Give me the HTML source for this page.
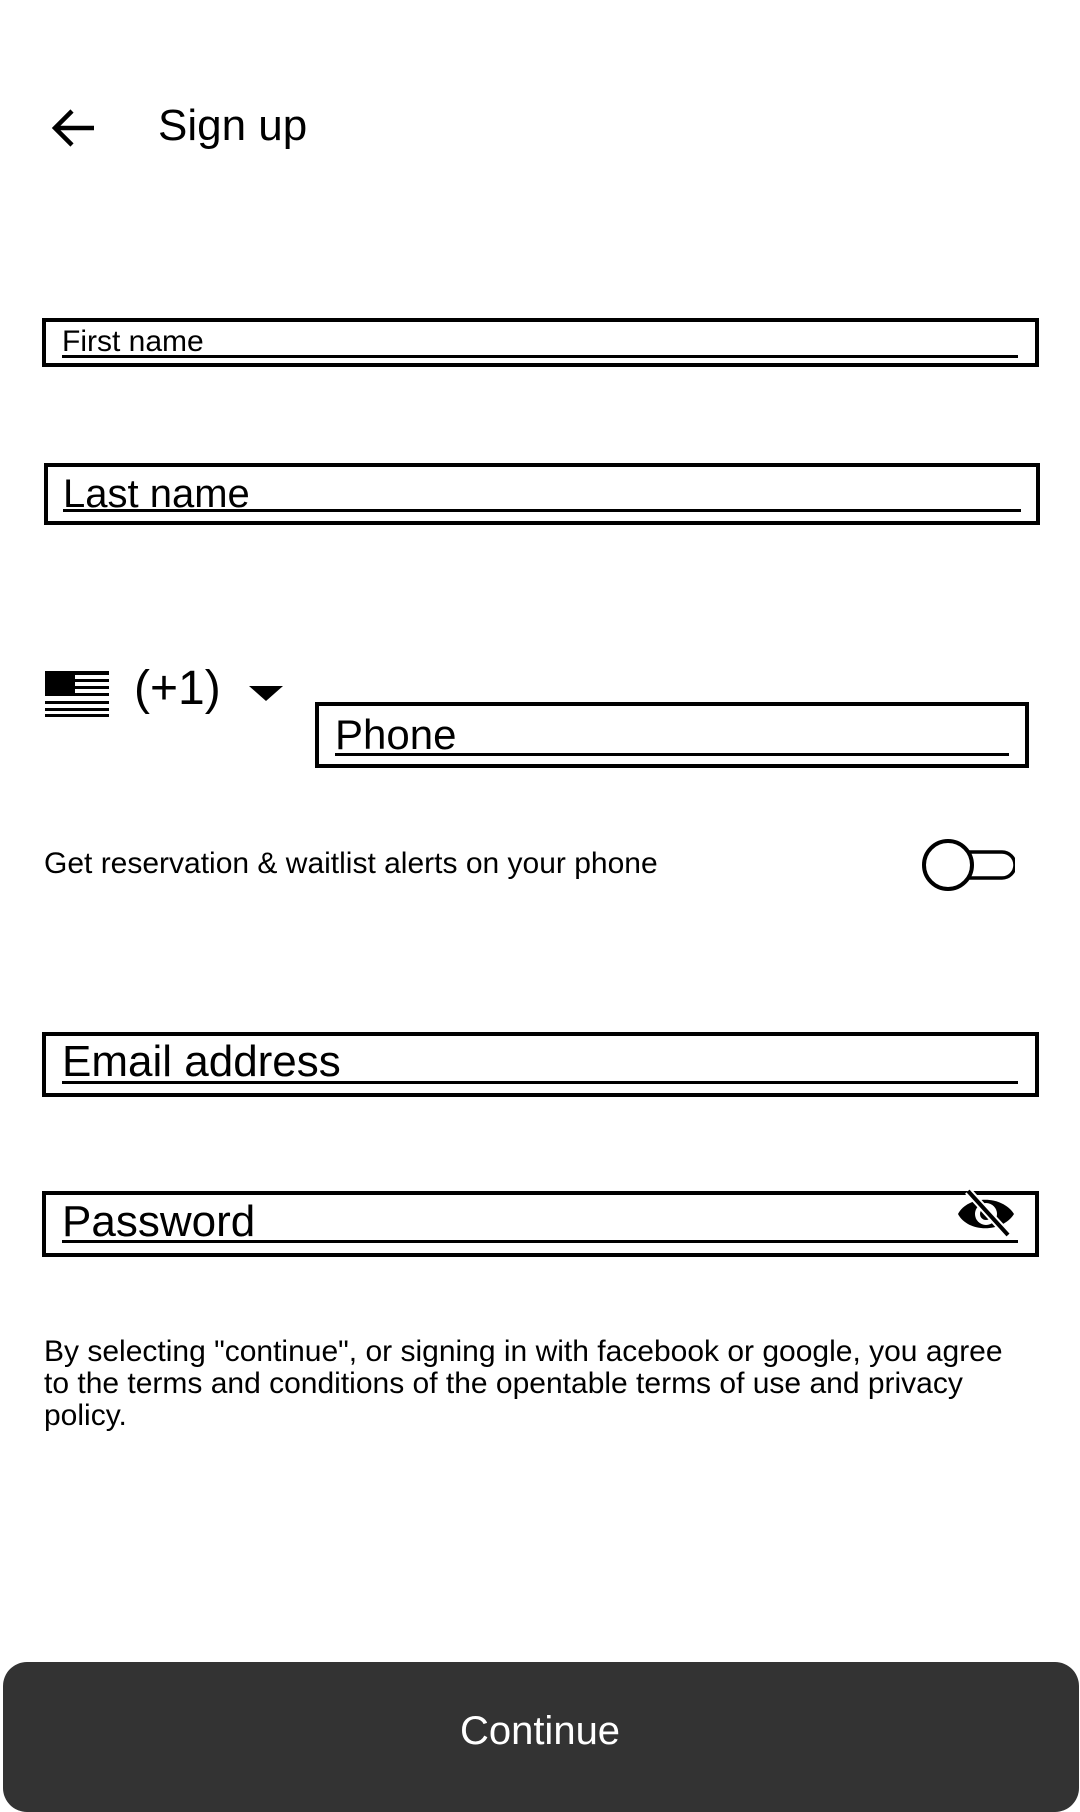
<!DOCTYPE html>
<html><head><meta charset="utf-8"><style>
*{margin:0;padding:0;box-sizing:border-box}
body{width:1080px;height:1800px;background:#fff;position:relative;overflow:hidden;font-family:"Liberation Sans",Arial,sans-serif;color:#000}
.abs{position:absolute}
.box{position:absolute;border:4px solid #000}
.ul{position:absolute;height:3px;background:#000}
.lbl{position:absolute;white-space:nowrap;line-height:1}
</style></head><body>
<svg class="abs" style="left:50px;top:106px" width="46" height="44" viewBox="0 0 46 44"><path d="M44 22H6M22 5L5 22L22 39" fill="none" stroke="#000" stroke-width="4.5"/></svg>
<div class="lbl" style="left:158px;top:104px;font-size:44px">Sign up</div>

<div class="box" style="left:42px;top:318px;width:997px;height:49px"></div>
<div class="lbl" style="left:62px;top:327px;font-size:30px">First name</div>
<div class="ul" style="left:62px;top:355px;width:956px"></div>

<div class="box" style="left:44px;top:463px;width:996px;height:62px"></div>
<div class="lbl" style="left:63px;top:474px;font-size:40px">Last name</div>
<div class="ul" style="left:63px;top:509px;width:958px"></div>

<svg class="abs" style="left:45px;top:671px" width="64" height="46" viewBox="0 0 64 46">
<rect x="0" y="0" width="64" height="4" fill="#000"/><rect x="0" y="8" width="64" height="3" fill="#000"/><rect x="0" y="15" width="64" height="3" fill="#000"/><rect x="0" y="22" width="64" height="3" fill="#000"/><rect x="0" y="30" width="64" height="3" fill="#000"/><rect x="0" y="37" width="64" height="3" fill="#000"/><rect x="0" y="43" width="64" height="3" fill="#000"/><rect x="0" y="0" width="30" height="24" fill="#000"/></svg>
<div class="lbl" style="left:134px;top:665px;font-size:48px">(+1)</div>
<svg class="abs" style="left:249px;top:686px" width="34" height="15"><path d="M0 0H34L17 15Z" fill="#000"/></svg>

<div class="box" style="left:315px;top:702px;width:714px;height:66px"></div>
<div class="lbl" style="left:335px;top:714px;font-size:42px">Phone</div>
<div class="ul" style="left:335px;top:753px;width:674px"></div>

<div class="lbl" style="left:44px;top:849px;font-size:30px">Get reservation &amp; waitlist alerts on your phone</div>
<svg class="abs" style="left:920px;top:837px" width="95" height="56" viewBox="0 0 95 56"><path d="M28 15H82A12 12 0 0 1 82 41H28" fill="#fff" stroke="#000" stroke-width="3.5"/><circle cx="28" cy="28" r="24" fill="#fff" stroke="#000" stroke-width="4"/></svg>

<div class="box" style="left:42px;top:1032px;width:997px;height:65px"></div>
<div class="lbl" style="left:62px;top:1040px;font-size:44px">Email address</div>
<div class="ul" style="left:62px;top:1081px;width:956px"></div>

<div class="box" style="left:42px;top:1191px;width:997px;height:66px"></div>
<div class="lbl" style="left:62px;top:1200px;font-size:44px">Password</div>
<div class="ul" style="left:62px;top:1240px;width:956px"></div>
<svg class="abs" style="left:956px;top:1189px" width="62" height="50" viewBox="0 0 62 50"><path d="M2 25C12 6 46 6 58 25C46 44 12 44 2 25Z" fill="#000"/><circle cx="30" cy="25" r="11" fill="#fff"/><circle cx="30" cy="25" r="6" fill="#000"/><path d="M12 2L52 46" stroke="#fff" stroke-width="8"/><path d="M12 2L52 46" stroke="#000" stroke-width="4"/></svg>

<div class="abs" style="left:44px;top:1336px;width:990px;font-size:30px;line-height:32px">By selecting "continue", or signing in with facebook or google, you agree to the terms and conditions of the opentable terms of use and privacy policy.</div>

<div class="abs" style="left:3px;top:1662px;width:1076px;height:150px;background:#333;border-radius:24px"></div>
<div class="lbl" style="left:0;width:1080px;text-align:center;top:1711px;font-size:40px;color:#fff">Continue</div>
</body></html>
